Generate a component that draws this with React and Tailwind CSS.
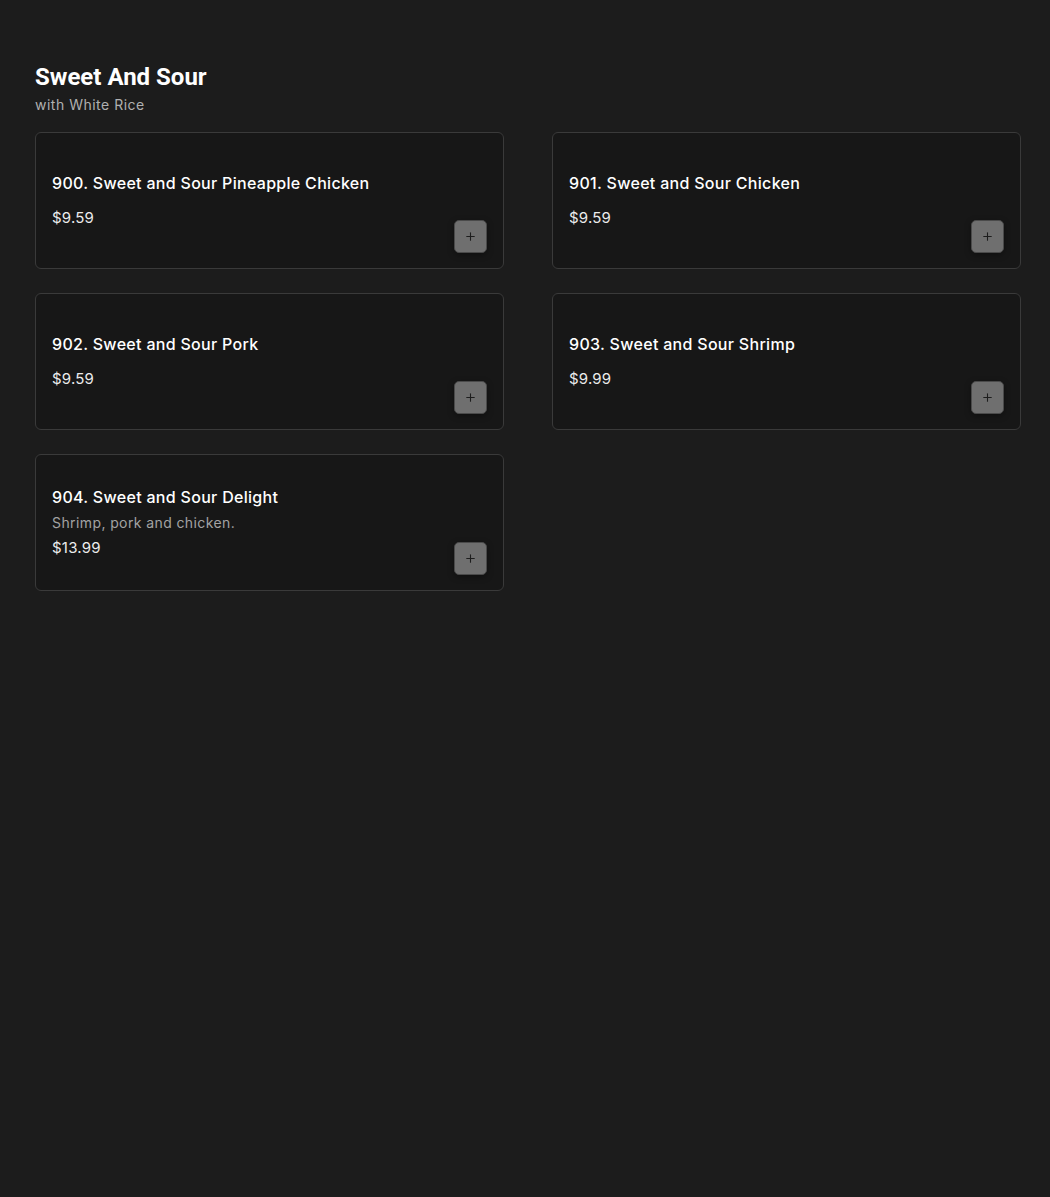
import { Plus } from 'lucide-react';

const items = [
  { id: 900, name: 'Sweet and Sour Pineapple Chicken', price: '$9.59' },
  { id: 901, name: 'Sweet and Sour Chicken', price: '$9.59' },
  { id: 902, name: 'Sweet and Sour Pork', price: '$9.59' },
  { id: 903, name: 'Sweet and Sour Shrimp', price: '$9.99' },
  { id: 904, name: 'Sweet and Sour Delight', price: '$13.99', description: 'Shrimp, pork and chicken.' },
];

function MenuCard({ item }) {
  return (
    <div className="flex justify-between h-[137px] rounded-md border border-[#3a3a3a] bg-[#171717] pl-4 pr-4 pb-[15px]">
      <div className="self-center flex flex-col pt-[14px]">
        <h3 className="text-[16px] leading-6 font-medium text-white tracking-[0.3px]">
          {item.id}. {item.name}
        </h3>
        {item.description ? (
          <>
            <p className="mt-1 text-[14px] leading-5 text-[#a3a3a3] tracking-[0.4px]">{item.description}</p>
            <span className="mt-1 text-[15px] leading-[22px] text-[#ececec] tracking-[0.2px]">{item.price}</span>
          </>
        ) : (
          <span className="mt-[12px] text-[15px] leading-[22px] text-[#ececec] tracking-[0.2px]">{item.price}</span>
        )}
      </div>
      <button className="self-end flex items-center justify-center w-[33px] h-[33px] rounded-[5px] bg-[#6f6f6f] border border-[#4a4a4a] shadow-[0_2px_6px_rgba(0,0,0,0.35)] text-[#1d1d1d]">
        <Plus size={13} strokeWidth={2} />
      </button>
    </div>
  );
}

export default function App() {
  return (
    <div className="min-h-[1197px] bg-[#1c1c1c] pt-[61px] pl-[35px] pr-[29px]" style={{ fontFamily: 'Inter, sans-serif' }}>
      <h2 className="text-[24px] leading-[32px] font-bold text-white" style={{ fontFamily: 'Roboto, sans-serif' }}>
        Sweet And Sour
      </h2>
      <p className="mt-[2px] text-[14px] leading-5 text-[#b0b0b0] tracking-[0.5px]">with White Rice</p>
      <div className="mt-[17px] grid grid-cols-2 gap-x-[48px] gap-y-[24px]">
        {items.map((item) => (
          <MenuCard key={item.id} item={item} />
        ))}
      </div>
    </div>
  );
}
